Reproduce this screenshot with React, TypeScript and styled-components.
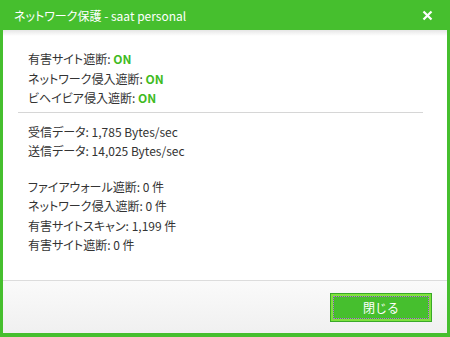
import styled, { createGlobalStyle } from "styled-components";

const green = "#46bf2e";

const GlobalStyle = createGlobalStyle`
    html, body {
        margin: 0;
        padding: 0;
        background: #ffffff;
    }
    body {
        font-family: "Noto Sans CJK JP", "Noto Sans", sans-serif;
        font-feature-settings: "palt";
    }
`;

const Window = styled.div`
    display: flex;
    flex-direction: column;
    width: 450px;
    height: 337px;
    box-sizing: border-box;
    background-color: ${green};
    padding: 0 3px 4px 3px;
`;

const TitleBar = styled.div`
    display: flex;
    align-items: center;
    justify-content: space-between;
    height: 30px;
    padding: 0 12px 0 11px;
    color: #ffffff;
    font-size: 12px;
`;

const CloseButton = styled.button`
    display: flex;
    align-items: center;
    justify-content: center;
    width: 16px;
    height: 16px;
    padding: 0;
    border: none;
    background: transparent;
    cursor: pointer;
`;

const Panel = styled.div`
    flex: 1;
    display: flex;
    flex-direction: column;
    background: linear-gradient(#e6e6e6 0px, #ffffff 6px);
`;

const Content = styled.div`
    flex: 1;
    padding: 19px 24px 0 25px;
    font-size: 12px;
    color: #333333;
`;

const Line = styled.div`
    height: 19.5px;
    line-height: 19.5px;
    white-space: nowrap;
`;

const On = styled.span`
    color: #3fbb1f;
    font-weight: bold;
    line-height: 1;
`;

const Group = styled.div<{ $gap?: number }>`
    margin-top: ${(p) => p.$gap ?? 0}px;
`;

const Divider = styled.hr`
    border: none;
    border-top: 1px solid #d6d6d6;
    margin: 4px 0 9px -10px;
`;

const Footer = styled.div`
    display: flex;
    justify-content: flex-end;
    height: 53px;
    padding: 12px 15px 0 0;
    box-sizing: border-box;
    border-top: 1px solid #dcdcdc;
    background: linear-gradient(#fafafa, #f0f0f0);
`;

const PrimaryButton = styled.button`
    position: relative;
    width: 102px;
    height: 29px;
    border: 1px solid #39a928;
    background-color: ${green};
    box-shadow: inset 0 0 0 2px #7fe23d;
    color: #ffffff;
    font-family: "Noto Sans CJK JP", sans-serif;
    font-size: 12px;
    cursor: pointer;

    &::after {
        content: "";
        position: absolute;
        inset: 2px;
        border: 1px dotted #b866e0;
    }
`;

const statusRows = [
    { label: "有害サイト遮断", value: "ON" },
    { label: "ネットワーク侵入遮断", value: "ON" },
    { label: "ビヘイビア侵入遮断", value: "ON" },
];

const trafficRows = [
    "受信データ: 1,785 Bytes/sec",
    "送信データ: 14,025 Bytes/sec",
];

const countRows = [
    "ファイアウォール遮断: 0 件",
    "ネットワーク侵入遮断: 0 件",
    "有害サイトスキャン: 1,199 件",
    "有害サイト遮断: 0 件",
];

function App(): JSX.Element {
    return (
        <>
            <GlobalStyle />
            <Window>
                <TitleBar>
                    <span>ネットワーク保護 - saat personal</span>
                    <CloseButton aria-label="閉じる">
                        <svg width="11" height="11" viewBox="0 0 11 11">
                            <path d="M1.5 1.5 L9.5 9.5 M9.5 1.5 L1.5 9.5" stroke="#ffffff" strokeWidth="2.2" />
                        </svg>
                    </CloseButton>
                </TitleBar>
                <Panel>
                    <Content>
                        {statusRows.map((r) => (
                            <Line key={r.label}>
                                {r.label}: <On>{r.value}</On>
                            </Line>
                        ))}
                        <Divider />
                        {trafficRows.map((t) => (
                            <Line key={t}>{t}</Line>
                        ))}
                        <Group $gap={16}>
                            {countRows.map((t) => (
                                <Line key={t}>{t}</Line>
                            ))}
                        </Group>
                    </Content>
                    <Footer>
                        <PrimaryButton>閉じる</PrimaryButton>
                    </Footer>
                </Panel>
            </Window>
        </>
    );
}

export default App;
